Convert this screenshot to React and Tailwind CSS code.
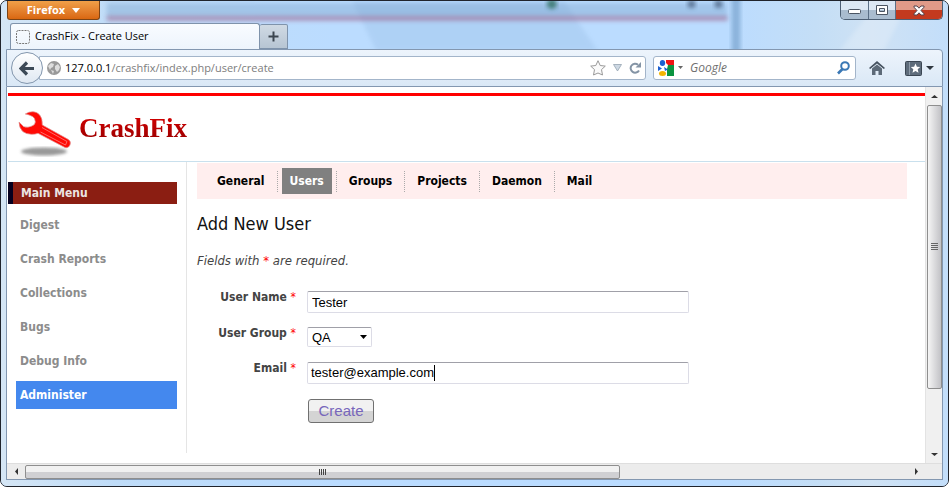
import React from "react";

const UI = "font-['Open_Sans','Noto_Sans',sans-serif]";

function Glass() {
  return (
    <svg aria-hidden="true" className="absolute inset-0 h-full w-full" viewBox="0 0 949 487" preserveAspectRatio="none">
      <defs>
        <linearGradient id="glass" x1="0" x2="1">
          <stop offset="0" stopColor="#d5e6f5" />
          <stop offset=".12" stopColor="#bfdcf8" />
          <stop offset=".35" stopColor="#bbdcff" />
          <stop offset=".77" stopColor="#bbdcff" />
          <stop offset=".86" stopColor="#c4def6" />
          <stop offset=".92" stopColor="#cfe2f4" />
          <stop offset="1" stopColor="#c3defa" />
        </linearGradient>
        <filter id="soft" x="-20%" y="-200%" width="140%" height="500%">
          <feGaussianBlur stdDeviation="2" />
        </filter>
      </defs>
      <rect width="949" height="487" fill="url(#glass)" />
      <path d="M352 0h212l34 50H376z" fill="#7fa6d0" opacity=".2" filter="url(#soft)" />
      <rect x="106" y="2" width="622" height="16" fill="#7ba3cb" opacity=".4" filter="url(#soft)" />
      <rect x="106" y="15" width="622" height="5" fill="#a8618a" opacity=".5" filter="url(#soft)" />
      <rect x="732" y="-5" width="9" height="60" fill="#6c98c4" opacity=".6" filter="url(#soft)" />
      <circle cx="552" cy="3" r="5" fill="#2d6f61" opacity=".8" filter="url(#soft)" />
      <circle cx="692" cy="3" r="4" fill="#4c6483" opacity=".8" filter="url(#soft)" />
      <circle cx="719" cy="3" r="4" fill="#4c6483" opacity=".8" filter="url(#soft)" />
      <path d="M840 50l40-50h30l-25 50z" fill="#fff" opacity=".2" filter="url(#soft)" />
    </svg>
  );
}

function TitleBar() {
  const control = "flex h-full items-center justify-center border-r border-[#5b6f86] bg-gradient-to-b from-[#dce8f4] from-50% to-[#a9bccf] to-50%";
  return (
    <div className="flex h-[22px] items-start justify-between pl-px">
      <button className={`${UI} flex h-[19px] w-[93px] items-center justify-center gap-[7px] rounded-b-[3px] border border-t-0 border-[#7d4415] bg-gradient-to-b from-[#f0a048] to-[#d9670f] text-[11px] font-bold text-white`}>
        Firefox
        <svg width="8" height="5" viewBox="0 0 8 5" aria-hidden="true"><path d="M0 0h8L4 5z" fill="#fff" /></svg>
      </button>
      <div className="flex h-[19px] w-[103px] overflow-hidden rounded-b-[5px] border border-t-0 border-[#4d5f74]">
        <button aria-label="Minimize" className={`${control} w-[28px]`}>
          <svg className="mt-1" width="13" height="6" viewBox="0 0 13 6"><rect x=".5" y=".5" width="12" height="4" rx="1" fill="#fff" stroke="#4b5563" /></svg>
        </button>
        <button aria-label="Maximize" className={`${control} w-[27px]`}>
          <svg width="12" height="10" viewBox="0 0 12 10"><path fillRule="evenodd" d="M.5.5h11v9H.5zM3.500 3.500v3h5v-3z" fill="#fff" stroke="#4b5563" /></svg>
        </button>
        <button aria-label="Close" className="flex h-full flex-1 items-center justify-center bg-gradient-to-b from-[#e09a88] from-50% to-[#c33a1e] to-50%">
          <svg width="12" height="11" viewBox="0 0 12 11"><path d="M1 1h3l2 2.200L8 1h3v1.200L8 5.500l3 3.300V10H8L6 7.800 4 10H1V8.800l3-3.300L1 2.200z" fill="#fff" stroke="#53424a" /></svg>
        </button>
      </div>
    </div>
  );
}

function Tabs() {
  return (
    <div className="flex h-[26px] items-end pl-1">
      <div className={`${UI} flex h-[26px] w-[250px] items-center gap-[5px] rounded-t-[3px] border border-b-0 border-[#7f93ab] bg-gradient-to-b from-[#f9fcff] to-[#edf4fc] pl-[5px] text-[11px] text-black`}>
        <svg width="14" height="14" viewBox="0 0 14 14" aria-hidden="true"><rect x=".5" y=".5" width="13" height="13" rx="2" fill="none" stroke="#777" strokeDasharray="2 1" /></svg>
        CrashFix - Create User
      </div>
      <button aria-label="New tab" className="flex h-[25px] w-[28px] items-center justify-center rounded-t-[2px] border border-l-0 border-[#7f93ab] bg-gradient-to-b from-[#d0dae4] to-[#b7c5d3]">
        <svg width="11" height="11" viewBox="0 0 11 11"><path d="M5.500.5v10M.5 5.500h10" stroke="#3c4650" strokeWidth="2" /></svg>
      </button>
    </div>
  );
}

function Toolbar() {
  return (
    <div className={`${UI} flex h-[38px] items-center rounded-tr-[4px] border border-[#8397b0] bg-gradient-to-b from-[#edf4fc] to-[#dae8f6] pl-1 pr-2`}>
      <button aria-label="Back" className="z-10 flex size-[32px] shrink-0 items-center justify-center rounded-full border border-[#8296ad] bg-gradient-to-b from-white to-[#dfe8f2]">
        <svg width="16" height="15" viewBox="0 0 16 15"><path d="M8 1.500L2 7.500l6 6M2.500 7.500H15" fill="none" stroke="#3d4a57" strokeWidth="3.200" /></svg>
      </button>
      <div className="-ml-1 flex h-[24px] flex-1 items-center rounded-r-[3px] border border-[#a3b5ca] bg-white pl-[7px] pr-1">
        <svg width="14" height="14" viewBox="0 0 14 14" aria-hidden="true"><circle cx="7" cy="7" r="7" fill="#999" /><path d="M1 5l3-3 3 1-1 3-2 1-1 2zM8 5l3-2 2 3-1 3-2 2-2-3zM4 9l3 1-1 3z" fill="#ddd" /></svg>
        <div className="ml-[4px] flex-1 text-[11px] text-[#7d7d7d]"><span className="text-black">127.0.0.1</span>/crashfix/index.php/user/create</div>
        <div className="flex items-center gap-[7px]">
          <svg width="16" height="16" viewBox="0 0 16 16" aria-hidden="true"><path d="M8 .7l2.200 4.800 5.100.6-3.800 3.500 1 5.400L8 13l-4.500 2 1-5.400L.7 6.100l5.100-.6z" fill="#fafafa" stroke="#999" /></svg>
          <svg width="9" height="8" viewBox="0 0 9 8" aria-hidden="true"><path d="M.5.5h8l-4 6.500z" fill="#cdd8e3" stroke="#95a3b1" strokeWidth=".8" /></svg>
          <svg width="12" height="12" viewBox="0 0 12 12" aria-hidden="true"><path d="M10 8.500A4.500 4.500 0 1 1 9 2.700" fill="none" stroke="#8494a5" strokeWidth="2" /><path d="M12 0v5.500H6.500z" fill="#8494a5" /></svg>
        </div>
      </div>
      <div className="ml-[7px] flex h-[24px] w-[203px] items-center rounded-[3px] border border-[#a3b5ca] bg-white pl-1 pr-[5px]">
        <svg width="16" height="16" viewBox="0 0 16 16" aria-hidden="true"><path d="M8 0h8v5h-6L8 3z" fill="#f01414" /><path d="M10 5h6v11H9V9z" fill="#0a9440" /><ellipse cx="4.500" cy="3" rx="2.700" ry="3" fill="#1c5fd0" /><path d="M0 6l4 2.500L0 11zM6 7l4 2.500L7 11z" fill="#1c5fd0" /><ellipse cx="4.500" cy="13.500" rx="3.500" ry="2.500" fill="#f4b400" /></svg>
        <svg className="ml-1" width="5" height="4" viewBox="0 0 5 4" aria-hidden="true"><path d="M0 0h5L2.500 3z" fill="#666" /></svg>
        <input aria-label="Search" placeholder="Google" className="ml-[7px] min-w-0 flex-1 text-[12px] italic outline-none placeholder:text-[#707070]" />
        <svg width="13" height="14" viewBox="0 0 13 14" aria-hidden="true"><circle cx="8" cy="5" r="3.800" fill="none" stroke="#3a78b5" strokeWidth="2" /><path d="M5.500 8L1 12.500" stroke="#3a78b5" strokeWidth="2.600" /></svg>
      </div>
      <button aria-label="Home" className="ml-[13px]">
        <svg width="16" height="14" viewBox="0 0 16 14"><path d="M8 0l8 7-1.200 1L8 2.500 1.200 8 0 7z" fill="#46525f" /><path d="M3 7.500l5-4 5 4V14H9.500v-4h-3v4H3z" fill="#5d6a78" /></svg>
      </button>
      <button aria-label="Bookmarks" className="ml-5 flex items-center gap-1">
        <svg width="17" height="15" viewBox="0 0 17 15"><rect x=".5" y=".5" width="16" height="14" rx="1" fill="#5e6c7b" stroke="#3b4653" /><path d="M4.500 1v13" stroke="#8d9aa8" /><path d="M10.500 2.500l1.400 3.200 3.300.3-2.500 2.300.8 3.400-3-1.800-3 1.800.8-3.400L5.800 6l3.300-.3z" fill="#fff" /></svg>
        <svg width="8" height="4" viewBox="0 0 8 4"><path d="M0 0h8L4 4z" fill="#2f3740" /></svg>
      </button>
    </div>
  );
}

function Header() {
  return (
    <header className="flex h-[69px] items-start border-b border-t-[3px] border-b-[#c9e0ed] border-t-[#ff0000] pl-[10px]">
      <svg className="mt-[14px]" width="54" height="50" viewBox="0 0 54 50" aria-hidden="true">
        <defs><filter id="blur"><feGaussianBlur stdDeviation="1.500" /></filter></defs>
        <ellipse cx="26" cy="41.500" rx="23" ry="4" fill="#777" opacity=".75" filter="url(#blur)" />
        <path d="M7.300 4Q11 1.500 15 1.700 19.500 2 21.700 5 24.500 8 24.300 15L50 29.300Q53 31 52.300 34 51 38.500 47 37.500L20 23.300Q17 24.500 13.300 24.300 8 24 5 21.700 1 18 1 12L5.700 16.700Q10 18 14 16 17.500 14.500 17.300 11.700 17 8 15 6.700 11 4.500 7.300 4z" fill="#ff0a05" stroke="#e09090" strokeWidth=".7" />
        <path d="M24 17.500l25 14-1.500 3.500-25-13" fill="none" stroke="#ff8f8f" strokeWidth=".7" />
      </svg>
      <a href="#" className="ml-[7px] mt-[15px] bg-gradient-to-b from-[#e00000] to-[#900000] bg-clip-text font-['Liberation_Serif',serif] text-[27px] leading-[34px] font-bold text-transparent">CrashFix</a>
    </header>
  );
}

const MENU = ["Digest", "Crash Reports", "Collections", "Bugs", "Debug Info", "Administer"];

function Sidebar() {
  return (
    <aside className="flex w-[179px] shrink-0 flex-col border-r border-[#e5e5e5] pr-[9px] pt-[20px] pb-[44px] text-[12px] font-bold">
      <h2 className="h-[22px] border-l-[5px] border-[#05001f] bg-[#8b1e12] pl-2 leading-[22px] text-[#ece4e2]">Main Menu</h2>
      <nav className="mt-[7px] ml-2 flex flex-col gap-[6px]">
        {MENU.map((m) => (
          <a key={m} href="#" className={`h-[28px] pl-1 leading-[28px] ${m === "Administer" ? "bg-[#4488ee] text-white" : "text-[#8c8c8c]"}`}>{m}</a>
        ))}
      </nav>
    </aside>
  );
}

const SECTIONS = ["General", "Users", "Groups", "Projects", "Daemon", "Mail"];

function SectionNav() {
  return (
    <nav className="mt-px flex h-[36px] items-center bg-[#ffeeee] pl-2 text-[12px] font-bold text-black">
      {SECTIONS.map((s) => (
        <div key={s} className="flex h-[21px] items-center border-r border-dotted border-[#aaa] px-1 last:border-0">
          <a href="#" className={`h-[26px] px-2 leading-[26px] ${s === "Users" ? "bg-[#808080] text-white" : ""}`}>{s}</a>
        </div>
      ))}
    </nav>
  );
}

const Star = () => <span className="font-normal text-[#ff0000]">*</span>;
const label = "w-[99px] shrink-0 text-right text-[12px] leading-3 font-bold text-[#444]";
const box = "border border-[#dcdce6] border-t-[#a0a0a8] bg-white font-['Liberation_Sans',Arial,sans-serif] text-[13px] text-black rounded-[2px]";

function UserForm() {
  return (
    <form className="mt-[13px]">
      <h1 className="text-[18px] leading-6 text-[#111]">Add New User</h1>
      <p className="mt-[17px] text-[13px] leading-4 text-[#444] italic">Fields with <Star /> are required.</p>
      <div className="mt-[22px] flex gap-[11px]">
        <label htmlFor="name" className={label}>User Name <Star /></label>
        <input id="name" defaultValue="Tester" className={`${box} h-[22px] w-[382px] px-1`} />
      </div>
      <div className="mt-[14px] flex items-start gap-[11px]">
        <label htmlFor="group" className={label}>User Group <Star /></label>
        <div className="grid items-center">
          <select id="group" className={`${box} col-start-1 row-start-1 h-[20px] w-[65px] appearance-none px-1`}><option>QA</option></select>
          <svg className="pointer-events-none z-10 col-start-1 row-start-1 mr-[5px] justify-self-end" width="7" height="4" viewBox="0 0 7 4" aria-hidden="true"><path d="M0 0h7L3.500 4z" fill="#000" /></svg>
        </div>
      </div>
      <div className="mt-[15px] flex gap-[11px]">
        <label htmlFor="email" className={label}>Email <Star /></label>
        <div className={`${box} flex h-[22px] w-[382px] items-center pl-[3px]`}>
          <input id="email" type="email" defaultValue="tester@example.com" className="field-sizing-content outline-none" />
          <span className="h-4 w-px bg-black" />
        </div>
      </div>
      <button type="button" className="mt-[15px] ml-[111px] h-[24px] w-[66px] rounded-[3px] border border-[#707070] bg-gradient-to-b from-[#f1f1f1] from-50% to-[#d4d4d4] to-50% font-['Liberation_Sans',Arial,sans-serif] text-[15px] leading-[22px] text-[#7766bb]">Create</button>
    </form>
  );
}

function Arrow({ d }) {
  return <svg className="shrink-0" width="7" height="7" viewBox="0 0 7 7" aria-hidden="true"><path d={d} fill="#333" /></svg>;
}

function VScroll() {
  return (
    <div className="flex w-[17px] shrink-0 flex-col items-center border-l border-[#e3e3e3] bg-[#f0f0f0]">
      <div className="flex h-[18px] items-center"><Arrow d="M0 5h7L3.500 2z" /></div>
      <div className="flex w-[15px] flex-[284] flex-col items-center justify-center gap-px rounded-[2px] border border-[#8e8e8e] bg-gradient-to-r from-[#f5f5f5] to-[#c2c2c6]">
        <i className="h-px w-[7px] bg-[#666]" /><i className="h-px w-[7px] bg-[#666]" /><i className="h-px w-[7px] bg-[#666]" /><i className="h-px w-[7px] bg-[#666]" />
      </div>
      <div className="flex-[57]" />
      <div className="flex h-[18px] items-center"><Arrow d="M0 2h7L3.500 5z" /></div>
    </div>
  );
}

function HScroll() {
  return (
    <div className="flex h-[16px] shrink-0 items-center border-t border-[#dedede] bg-[#ececec] pr-[17px]">
      <div className="flex w-[18px] justify-center"><Arrow d="M5 0v7L2 3.500z" /></div>
      <div className="flex h-[14px] flex-[594] items-center justify-center gap-px rounded-[2px] border border-[#8e8e8e] bg-gradient-to-b from-[#f1f1f1] from-50% to-[#d0d0d3] to-50%">
        <i className="h-[6px] w-px bg-[#444]" /><i className="h-[6px] w-px bg-[#444]" /><i className="h-[6px] w-px bg-[#444]" /><i className="h-[6px] w-px bg-[#444]" />
      </div>
      <div className="flex-[288]" />
      <div className="flex w-[18px] justify-center"><Arrow d="M2 0v7l3-3.500z" /></div>
    </div>
  );
}

export default function App() {
  return (
    <div className="relative h-screen overflow-hidden rounded-[7px] border border-[#20242c] bg-[#bbdcff]">
      <Glass />
      <div className="relative flex h-full flex-col px-[5px] pb-[6px]">
        <TitleBar />
        <Tabs />
        <Toolbar />
        <div className="flex min-h-0 flex-1 flex-col border border-t-0 border-[#8397b0] bg-white">
          <div className="flex min-h-0 flex-1">
            <div className="min-w-0 flex-1 overflow-hidden bg-white pt-[6px] pl-px font-['DejaVu_Sans_Condensed','Noto_Sans',sans-serif]">
              <Header />
              <div className="flex items-start">
                <Sidebar />
                <main className="min-w-0 flex-1 pr-[18px] pl-[10px]">
                  <SectionNav />
                  <UserForm />
                </main>
              </div>
            </div>
            <VScroll />
          </div>
          <HScroll />
        </div>
      </div>
    </div>
  );
}
